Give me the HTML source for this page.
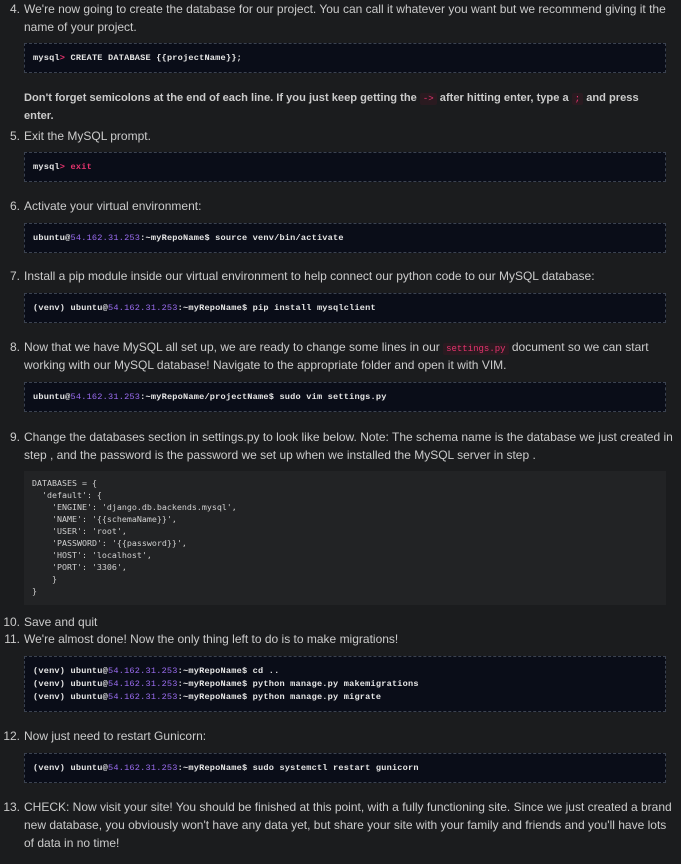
<!DOCTYPE html>
<html><head><meta charset="utf-8"><style>
html,body{margin:0;padding:0;background:#1b1c1e;width:681px;height:864px;overflow:hidden}
body{position:relative;font-family:"Liberation Sans",sans-serif;font-size:12px;color:#cbcbcb}
.l{position:absolute;left:24px;white-space:nowrap;line-height:18px}
.n{position:absolute;white-space:nowrap;line-height:18px;text-align:right;width:20px}
.b{font-weight:bold;font-size:11.1px}
.box{position:absolute;left:24px;width:642px;background:#0a0d18;border:1px dashed #3b4250;box-sizing:border-box}
.c{position:absolute;left:8px;white-space:pre;font-family:"Liberation Mono",monospace;font-size:8.6px;font-weight:bold;color:#e6e6e6;line-height:13px;letter-spacing:0.2px}
.p{color:#e6336e}
.ip{color:#9a6cf0;font-weight:normal}
.ic{font-family:"Liberation Mono",monospace;font-size:9px;color:#e6336e;background:#2a1a20;padding:1px 3px;border-radius:2px;font-weight:normal}
.gb{position:absolute;left:24px;width:642px;top:471px;height:134px;background:#222325}
.gc{position:absolute;left:8px;top:6px;white-space:pre;font-family:"DejaVu Sans Mono",monospace;font-size:8.3px;color:#d0d0d0;line-height:12px}
</style></head><body>
<div class="n" style="left:0;top:0px">4.</div>
<div class="l" style="top:0px">We're now going to create the database for our project. You can call it whatever you want but we recommend giving it the</div>
<div class="l" style="top:18px">name of your project.</div>
<div class="box" style="top:43px;height:30px"><div class="c" style="top:8px">mysql<span class="p">&gt;</span> CREATE DATABASE {{projectName}};</div></div>
<div class="l b" style="top:89px">Don't forget semicolons at the end of each line. If you just keep getting the <span class="ic">-&gt;</span> after hitting enter, type a <span class="ic">;</span> and press</div>
<div class="l b" style="top:107px">enter.</div>
<div class="n" style="left:0;top:127px">5.</div>
<div class="l" style="top:127px">Exit the MySQL prompt.</div>
<div class="box" style="top:152px;height:30px"><div class="c" style="top:8px">mysql<span class="p">&gt; exit</span></div></div>
<div class="n" style="left:0;top:197px">6.</div>
<div class="l" style="top:197px">Activate your virtual environment:</div>
<div class="box" style="top:223px;height:30px"><div class="c" style="top:8px">ubuntu@<span class="ip">54.162.31.253</span>:~myRepoName$ source venv/bin/activate</div></div>
<div class="n" style="left:0;top:267px">7.</div>
<div class="l" style="top:267px">Install a pip module inside our virtual environment to help connect our python code to our MySQL database:</div>
<div class="box" style="top:293px;height:30px"><div class="c" style="top:8px">(venv) ubuntu@<span class="ip">54.162.31.253</span>:~myRepoName$ pip install mysqlclient</div></div>
<div class="n" style="left:0;top:338px">8.</div>
<div class="l" style="top:338px">Now that we have MySQL all set up, we are ready to change some lines in our <span class="ic">settings.py</span> document so we can start</div>
<div class="l" style="top:356px">working with our MySQL database! Navigate to the appropriate folder and open it with VIM.</div>
<div class="box" style="top:382px;height:30px"><div class="c" style="top:8px">ubuntu@<span class="ip">54.162.31.253</span>:~myRepoName/projectName$ sudo vim settings.py</div></div>
<div class="n" style="left:0;top:428px">9.</div>
<div class="l" style="top:428px">Change the databases section in settings.py to look like below. Note: The schema name is the database we just created in</div>
<div class="l" style="top:446px">step , and the password is the password we set up when we installed the MySQL server in step .</div>
<div class="gb"><div class="gc">DATABASES = {
  'default': {
    'ENGINE': 'django.db.backends.mysql',
    'NAME': '{{schemaName}}',
    'USER': 'root',
    'PASSWORD': '{{password}}',
    'HOST': 'localhost',
    'PORT': '3306',
    }
}</div></div>
<div class="n" style="left:0;top:613px">10.</div>
<div class="l" style="top:613px">Save and quit</div>
<div class="n" style="left:0;top:630px">11.</div>
<div class="l" style="top:630px">We're almost done! Now the only thing left to do is to make migrations!</div>
<div class="box" style="top:656px;height:56px"><div class="c" style="top:8px">(venv) ubuntu@<span class="ip">54.162.31.253</span>:~myRepoName$ cd ..
(venv) ubuntu@<span class="ip">54.162.31.253</span>:~myRepoName$ python manage.py makemigrations
(venv) ubuntu@<span class="ip">54.162.31.253</span>:~myRepoName$ python manage.py migrate</div></div>
<div class="n" style="left:0;top:727px">12.</div>
<div class="l" style="top:727px">Now just need to restart Gunicorn:</div>
<div class="box" style="top:753px;height:30px"><div class="c" style="top:8px">(venv) ubuntu@<span class="ip">54.162.31.253</span>:~myRepoName$ sudo systemctl restart gunicorn</div></div>
<div class="n" style="left:0;top:798px">13.</div>
<div class="l" style="top:798px">CHECK: Now visit your site! You should be finished at this point, with a fully functioning site. Since we just created a brand</div>
<div class="l" style="top:816px">new database, you obviously won't have any data yet, but share your site with your family and friends and you'll have lots</div>
<div class="l" style="top:834px">of data in no time!</div>
</body></html>
